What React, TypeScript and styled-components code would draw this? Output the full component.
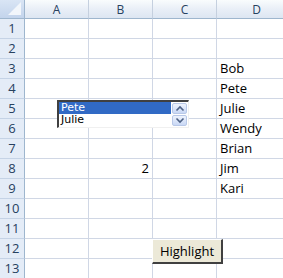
import styled, { createGlobalStyle } from "styled-components";

const GlobalStyle = createGlobalStyle`
  html, body { margin: 0; padding: 0; background: #ffffff; }
  body { width: 283px; height: 278px; overflow: hidden; }
`;

const columns = ["A", "B", "C", "D"];
const names: Record<number, string> = {
  3: "Bob",
  4: "Pete",
  5: "Julie",
  6: "Wendy",
  7: "Brian",
  8: "Jim",
  9: "Kari",
};

const App: React.FC = () => {
  const rows = Array.from({ length: 13 }, (_, i) => i + 1);
  return (
    <>
      <GlobalStyle />
      <Sheet>
        <Grid>
          <Corner>
            <CornerTriangle />
          </Corner>
          {columns.map((c) => (
            <ColHeader key={c}>{c}</ColHeader>
          ))}
          {rows.map((r) => (
            <Row key={r} r={r} />
          ))}
        </Grid>

        <ListBox>
          <ListItems>
            <ListItem $selected>Pete</ListItem>
            <ListItem>Julie</ListItem>
          </ListItems>
          <Spinner>
            <SpinButton>
              <svg width="10" height="7" viewBox="0 0 10 7">
                <path d="M1.5 5.5 L5 2 L8.5 5.5" fill="none" stroke="#4d6185" strokeWidth="1.6" />
              </svg>
            </SpinButton>
            <SpinButton>
              <svg width="10" height="7" viewBox="0 0 10 7">
                <path d="M1.5 1.5 L5 5 L8.5 1.5" fill="none" stroke="#4d6185" strokeWidth="1.6" />
              </svg>
            </SpinButton>
          </Spinner>
        </ListBox>

        <HighlightButton>Highlight</HighlightButton>
      </Sheet>
    </>
  );
};

const Row: React.FC<{ r: number }> = ({ r }) => (
  <>
    <RowHeader>{r}</RowHeader>
    <Cell />
    <Cell $align="right">{r === 8 ? "2" : ""}</Cell>
    <Cell />
    <Cell>{names[r] ?? ""}</Cell>
  </>
);

export default App;

const Sheet = styled.div`
  position: relative;
  width: 283px;
  height: 278px;
  overflow: hidden;
  font-family: "Open Sans", "DejaVu Sans", sans-serif;
`;

const Grid = styled.div`
  display: grid;
  grid-template-columns: 25px 64px 64px 64px 80px;
  grid-template-rows: 19px repeat(13, 20px);
`;

const Corner = styled.div`
  position: relative;
  background: linear-gradient(#d9e5f5, #c3d4ec);
  border-right: 1px solid #9eb6ce;
  border-bottom: 1px solid #9eb6ce;
  box-sizing: border-box;
`;

const CornerTriangle = styled.div`
  position: absolute;
  right: 3px;
  bottom: 3px;
  width: 0;
  height: 0;
  border-left: 13px solid transparent;
  border-bottom: 13px solid #f2f6fb;
`;

const ColHeader = styled.div`
  box-sizing: border-box;
  display: flex;
  align-items: center;
  justify-content: center;
  background: linear-gradient(#f9fcfd 0%, #e9eff7 50%, #dde6f2 100%);
  border-right: 1px solid #c5d0df;
  border-bottom: 1px solid #9eb6ce;
  font-size: 12px;
  color: #27415f;
`;

const RowHeader = styled.div`
  box-sizing: border-box;
  display: flex;
  align-items: flex-end;
  justify-content: center;
  padding-bottom: 1px;
  background: #e4ecf7;
  border-right: 1px solid #9eb6ce;
  border-bottom: 1px solid #c5d3e6;
  font-size: 13px;
  color: #27415f;
`;

const Cell = styled.div<{ $align?: "left" | "right" }>`
  box-sizing: border-box;
  display: flex;
  align-items: flex-end;
  justify-content: ${(p) => (p.$align === "right" ? "flex-end" : "flex-start")};
  padding: 0 3px 1px 3px;
  border-right: 1px solid #d0d7e5;
  border-bottom: 1px solid #d0d7e5;
  font-size: 13px;
  color: #000000;
  white-space: nowrap;
`;

const ListBox = styled.div`
  position: absolute;
  left: 57px;
  top: 100px;
  width: 132px;
  height: 28px;
  box-sizing: border-box;
  display: flex;
  background: #ffffff;
  border-top: 2px solid #404040;
  border-left: 2px solid #404040;
  border-right: 1px solid #f0f0f0;
  border-bottom: 1px solid #f0f0f0;
`;

const ListItems = styled.div`
  flex: 1;
  display: flex;
  flex-direction: column;
`;

const ListItem = styled.div<{ $selected?: boolean }>`
  height: 12px;
  line-height: 12px;
  padding-left: 2px;
  font-family: "DejaVu Sans", sans-serif;
  font-size: 11px;
  color: ${(p) => (p.$selected ? "#ffffff" : "#000000")};
  background: ${(p) => (p.$selected ? "#316ac5" : "transparent")};
`;

const Spinner = styled.div`
  display: flex;
  flex-direction: column;
  gap: 1px;
  padding: 1px 1px 0 1px;
  width: 15px;
`;

const SpinButton = styled.div`
  height: 11px;
  display: flex;
  align-items: center;
  justify-content: center;
  box-sizing: border-box;
  border: 1px solid #b8c8e8;
  border-radius: 2px;
  background: linear-gradient(#eef3fd, #c9d8f5);
`;

const HighlightButton = styled.button`
  position: absolute;
  left: 152px;
  top: 239px;
  width: 71px;
  height: 25px;
  box-sizing: border-box;
  margin: 0;
  padding: 0;
  background: #ece9d8;
  border-top: 1px solid #ffffff;
  border-left: 1px solid #ffffff;
  border-right: 2px solid #404040;
  border-bottom: 2px solid #404040;
  font-family: "Open Sans", "DejaVu Sans", sans-serif;
  font-size: 13px;
  color: #000000;
`;
